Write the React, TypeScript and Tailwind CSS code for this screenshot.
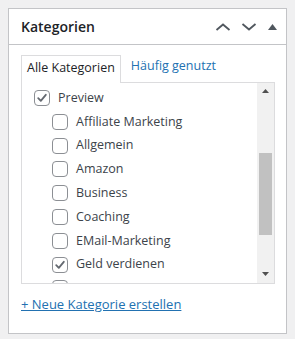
import React from "react";

const font = { fontFamily: '"Open Sans", "Noto Sans", sans-serif' };

function Box({ checked }: { checked?: boolean }) {
  return (
    <span className="w-4 h-4 shrink-0 rounded-[4px] border border-[#8c8f94] bg-white flex items-center justify-center">
      {checked && (
        <svg width="12" height="12" viewBox="0 0 12 12">
          <path d="M2.2 6.2 L4.8 8.8 L9.8 2.8" fill="none" stroke="#646970" strokeWidth="1.8" strokeLinecap="round" strokeLinejoin="round" />
        </svg>
      )}
    </span>
  );
}

function Row({ label, checked, child }: { label: string; checked?: boolean; child?: boolean }) {
  return (
    <div className={`flex items-center h-[23.8px] gap-2 ${child ? "pl-[18px]" : ""}`}>
      <Box checked={checked} />
      <span className="text-[12.5px] text-[#3c434a] whitespace-nowrap">{label}</span>
    </div>
  );
}

export default function App() {
  const children = [
    { l: "Affiliate Marketing" },
    { l: "Allgemein" },
    { l: "Amazon" },
    { l: "Business" },
    { l: "Coaching" },
    { l: "EMail-Marketing" },
    { l: "Geld verdienen", c: true },
    { l: "" },
  ];
  return (
    <div className="w-[295px] h-[339px] bg-[#f0f0f1] p-2" style={font}>
      <div className="h-[326px] border border-[#c3c4c7] bg-white">
        <div className="h-[36px] border-b border-[#c3c4c7] flex items-center pl-3 pr-[9px]">
          <h2 className="text-[14px] font-semibold text-[#1d2327] flex-1">Kategorien</h2>
          <div className="flex items-center">
            <svg width="16" height="8" viewBox="0 0 16 8" className="mr-[10px]">
              <path d="M1.5 7 L8 1.5 L14.5 7" fill="none" stroke="#50575e" strokeWidth="1.8" />
            </svg>
            <svg width="16" height="8" viewBox="0 0 16 8" className="mr-[11px]">
              <path d="M1.5 1 L8 6.5 L14.5 1" fill="none" stroke="#50575e" strokeWidth="1.8" />
            </svg>
            <svg width="9" height="6" viewBox="0 0 9 6">
              <path d="M0 6 L4.5 0 L9 6 Z" fill="#50575e" />
            </svg>
          </div>
        </div>
        <div className="px-3 pt-[9px]">
          <div className="flex items-end">
            <div className="relative z-10 -mb-px h-[28px] border border-b-0 border-[#dcdcde] bg-white px-[5px] pt-[3px] text-[12.5px] text-[#1d2327]">
              Alle Kategorien
            </div>
            <div className="h-[28px] px-[10px] pt-[3px] text-[12.5px] text-[#2271b1]">Häufig genutzt</div>
          </div>
          <div className="w-[254px] h-[202px] border border-[#dcdcde] flex overflow-hidden">
            <div className="flex-1 pl-3 pt-[3px] overflow-hidden">
              <div className="flex items-center h-[24px] gap-2">
                <Box checked />
                <span className="text-[12.5px] text-[#3c434a]">Preview</span>
              </div>
              {children.map((c, i) => (
                <Row key={i} label={c.l} checked={c.c} child />
              ))}
            </div>
            <div className="w-[17px] bg-[#f1f1f1] relative">
              <svg width="7" height="4" viewBox="0 0 7 4" className="absolute left-[5px] top-[6px]">
                <path d="M0 4 L3.5 0 L7 4 Z" fill="#505050" />
              </svg>
              <div className="absolute left-[2px] w-[13px] top-[70px] h-[82px] bg-[#c1c1c1]" />
              <svg width="7" height="4" viewBox="0 0 7 4" className="absolute left-[5px] top-[189px]">
                <path d="M0 0 L3.5 4 L7 0 Z" fill="#505050" />
              </svg>
            </div>
          </div>
          <div className="mt-[10px] text-[13px] leading-[20px]">
            <a href="#" className="text-[#2271b1] underline">+ Neue Kategorie erstellen</a>
          </div>
        </div>
      </div>
    </div>
  );
}
